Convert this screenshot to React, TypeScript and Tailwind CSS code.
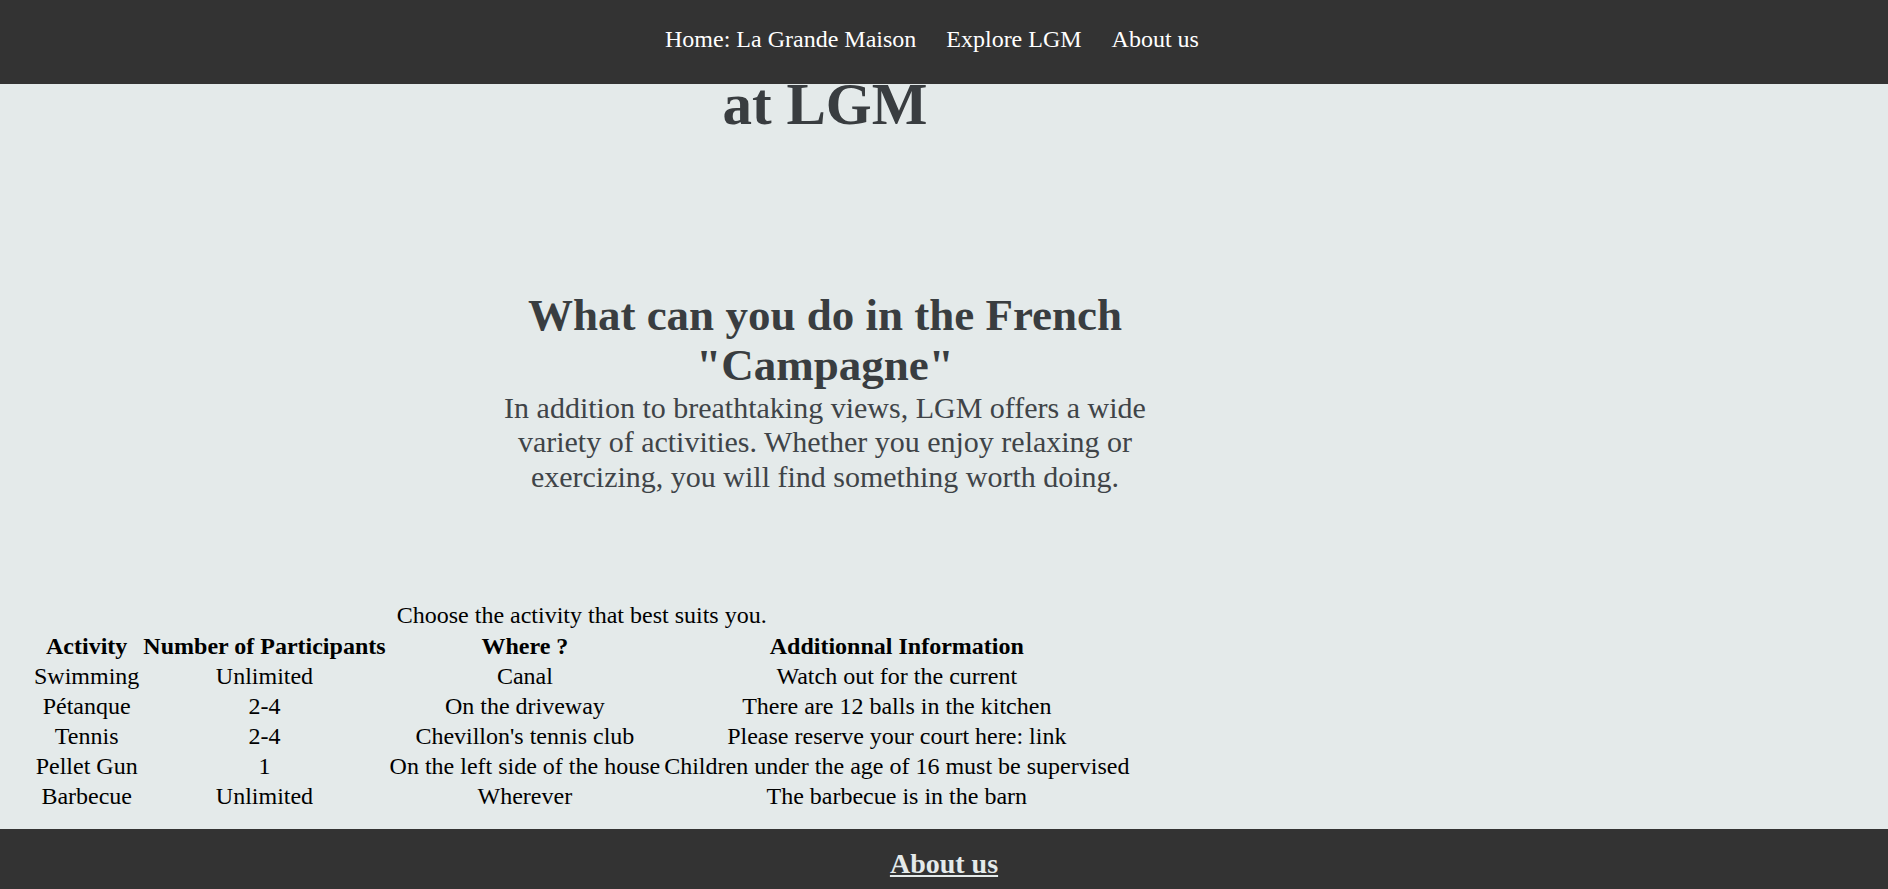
import React from 'react';

const activities = [
  { name: 'Swimming', people: 'Unlimited', where: 'Canal', info: 'Watch out for the current' },
  { name: 'Pétanque', people: '2-4', where: 'On the driveway', info: 'There are 12 balls in the kitchen' },
  { name: 'Tennis', people: '2-4', where: "Chevillon's tennis club", info: 'Please reserve your court here: link' },
  { name: 'Pellet Gun', people: '1', where: 'On the left side of the house', info: 'Children under the age of 16 must be supervised' },
  { name: 'Barbecue', people: 'Unlimited', where: 'Wherever', info: 'The barbecue is in the barn' },
];

export default function App() {
  return (
    <div className="min-h-screen bg-[#e4eaea] font-['Liberation_Serif','Times_New_Roman',serif]">
      {/* ── NAV ── */}
      <nav className="fixed top-0 inset-x-0 z-10 h-[84px] bg-[#333333] flex items-center justify-center gap-[30px] pr-[24px] pb-[4px] text-[24px] leading-[1.149] text-white">
        <a href="#">Home: La Grande Maison</a>
        <a href="#">Explore LGM</a>
        <a href="#">About us</a>
      </nav>

      <main>
        {/* ── INTRO ── */}
        <section className="w-[680px] ml-[485px] pt-[3px] text-center">
          <h1 className="text-[59px] font-bold leading-[1.149] text-[#393d40]">
            Activities
            <br />
            at LGM
          </h1>
          <h2 className="mt-[151px] text-[45px] font-bold leading-[50.5px] text-[#393d40]">
            What can you do in the French "Campagne"
          </h2>
          <p className="text-[30px] leading-[1.149] text-[#3f4448]">
            In addition to breathtaking views, LGM offers a wide variety of activities. Whether you enjoy relaxing or exercizing, you will find something worth doing.
          </p>
        </section>

        {/* ── TABLE ── */}
        <table className="ml-[31px] mt-[108px] border-separate border-spacing-[2px] text-[24px] text-black">
          <caption className="leading-[1.149]">Choose the activity that best suits you.</caption>
          <thead>
            <tr>
              <th className="px-[1px] py-[1px] leading-[26px] font-bold">Activity</th>
              <th className="px-[1px] py-[1px] leading-[26px] font-bold">Number of Participants</th>
              <th className="px-[1px] py-[1px] leading-[26px] font-bold">Where ?</th>
              <th className="px-[1px] py-[1px] leading-[26px] font-bold">Additionnal Information</th>
            </tr>
          </thead>
          <tbody>
            {activities.map((a) => (
              <tr key={a.name}>
                <td className="px-[1px] py-[1px] leading-[26px] text-center">{a.name}</td>
                <td className="px-[1px] py-[1px] leading-[26px] text-center">{a.people}</td>
                <td className="px-[1px] py-[1px] leading-[26px] text-center">{a.where}</td>
                <td className="px-[1px] py-[1px] leading-[26px] text-center">{a.info}</td>
              </tr>
            ))}
          </tbody>
        </table>
      </main>

      {/* ── FOOTER ── */}
      <footer className="mt-[17px] bg-[#333333] pt-[19px] pb-[18px] text-center">
        <a href="#" className="text-[28px] font-bold leading-[1.149] text-[#e4eaea] underline">
          About us
        </a>
      </footer>
    </div>
  );
}
